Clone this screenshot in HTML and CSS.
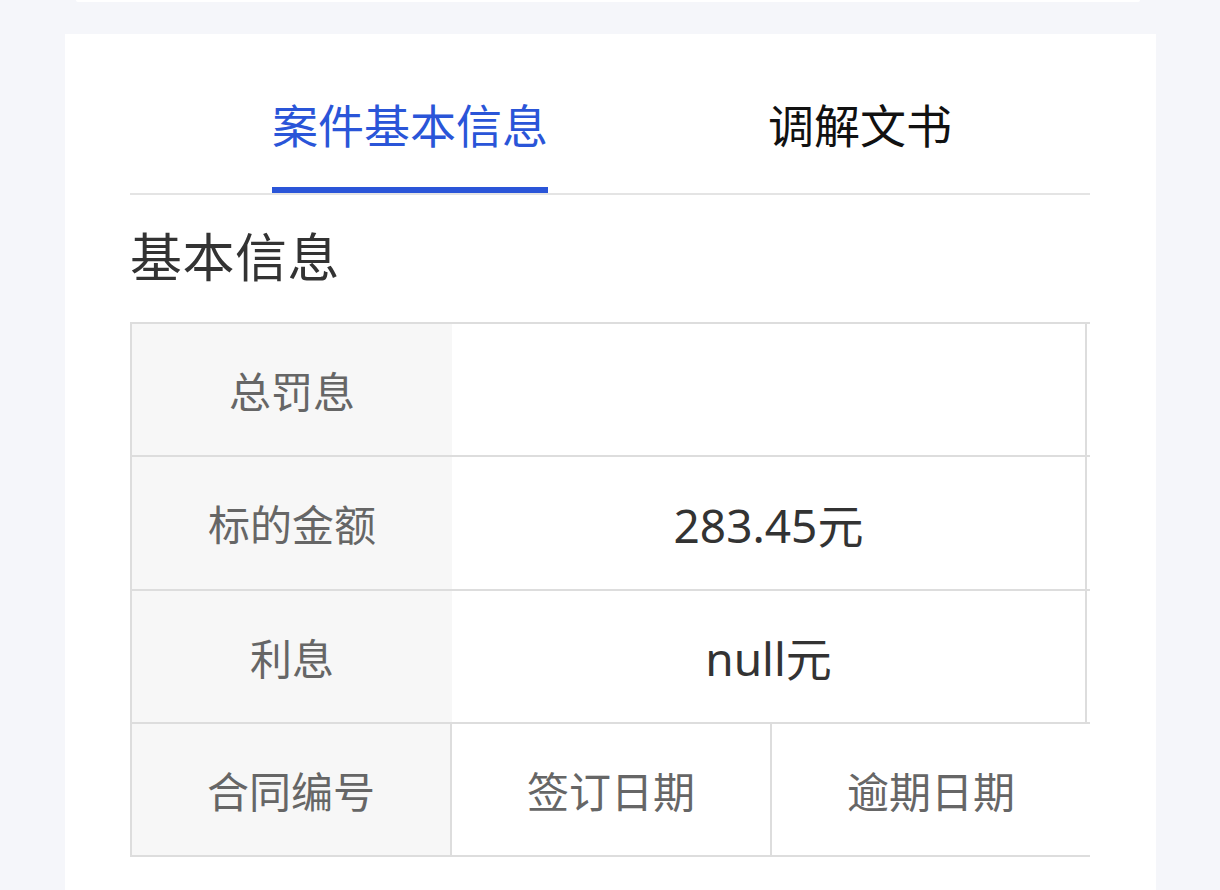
FILE: index.html
```html
<!DOCTYPE html>
<html lang="zh-CN">
<head>
<meta charset="utf-8">
<title>案件基本信息</title>
<link rel="stylesheet" href="styles.css">
</head>
<body>
<div class="prev-card"></div>
<main class="card">
  <nav class="tabs">
    <div class="tab active">案件基本信息</div>
    <div class="tab">调解文书</div>
  </nav>
  <h2 class="section-title">基本信息</h2>
  <div class="info-table">
    <div class="row">
      <div class="cell label">总罚息</div>
      <div class="cell value"></div>
    </div>
    <div class="row">
      <div class="cell label">标的金额</div>
      <div class="cell value">283.45元</div>
    </div>
    <div class="row">
      <div class="cell label">利息</div>
      <div class="cell value">null元</div>
    </div>
    <div class="row row-last">
      <div class="cell label">合同编号</div>
      <div class="cell third">签订日期</div>
      <div class="cell third">逾期日期</div>
    </div>
  </div>
</main>
</body>
</html>
```
FILE: styles.css
```css
html, body {
  margin: 0;
  padding: 0;
}
body {
  background: #f5f6fa;
  font-family: "Noto Sans CJK SC", "Noto Sans", sans-serif;
  height: 890px;
  overflow: hidden;
}
.prev-card {
  height: 2px;
  margin: 0 80px 0 76px;
  background: #ffffff;
  border-radius: 0 0 8px 8px;
}
.card {
  margin: 32px 64px 0 65px;
  background: #ffffff;
  padding: 0 66px 0 65px;
  height: 900px;
}
.tabs {
  display: flex;
  gap: 220px;
  padding-left: 142px;
  padding-top: 57px;
  border-bottom: 2px solid #e4e4e4;
}
.tab {
  font-size: 46px;
  line-height: 64px;
  padding-bottom: 32px;
  border-bottom: 6px solid transparent;
  color: #111111;
}
.tab.active {
  color: #2a55d8;
  border-bottom-color: #2a55d8;
}
.section-title {
  margin: 0;
  padding-top: 24px;
  font-size: 52px;
  line-height: 72px;
  font-weight: 400;
  color: #333333;
  letter-spacing: 0.5px;
}
.info-table {
  margin-top: 31px;
  border-left: 2px solid #dddddd;
  border-bottom: 2px solid #dddddd;
}
.row {
  display: flex;
  height: 131.3px;
  border-top: 2px solid #dddddd;
}
.cell {
  display: flex;
  align-items: center;
  justify-content: center;
  font-size: 42px;
  color: #666666;
}
.label {
  width: 320px;
  background: #f7f7f7;
}
.value {
  flex: 1;
  margin-right: 3px;
  border-right: 2px solid #dddddd;
  font-family: "Noto Sans", "Noto Sans CJK SC", sans-serif;
  font-size: 46px;
  color: #333333;
}
.row-last .label {
  width: 318px;
}
.third {
  flex: 1;
  border-left: 2px solid #dddddd;
}
```
